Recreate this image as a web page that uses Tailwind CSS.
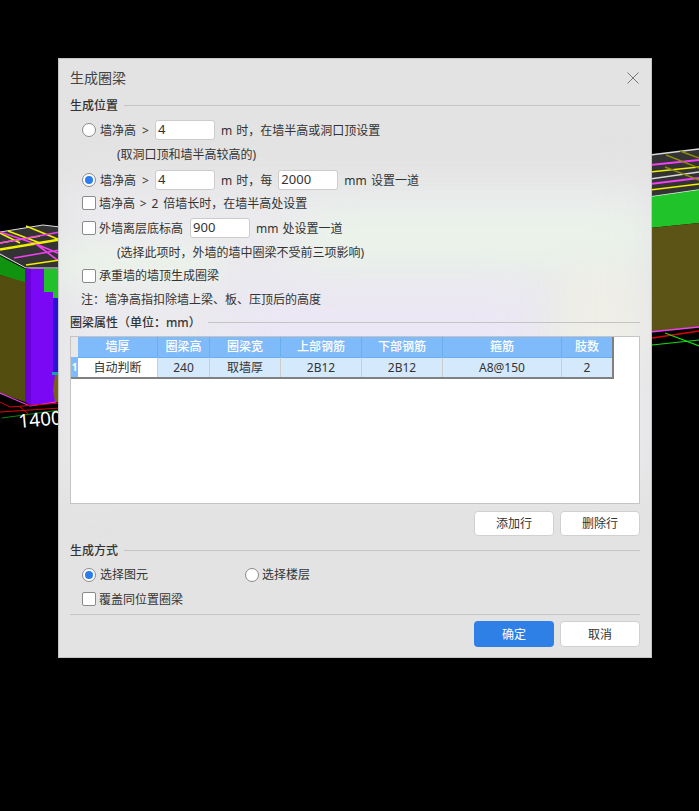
<!DOCTYPE html>
<html lang="zh-CN">
<head>
    <meta charset="UTF-8">
    <meta name="viewport" content="width=device-width, initial-scale=1.0">
    <title>生成圈梁</title>
    <script src="https://cdn.jsdelivr.net/npm/@tailwindcss/browser@4"></script>
</head>
<body class="bg-black">
<div class="relative w-[699px] h-[811px] overflow-hidden bg-black font-['Noto_Sans','Noto_Sans_CJK_SC',sans-serif] text-xs text-[#333]">

    <!-- 3d model behind the dialog -->
    <svg class="absolute left-0 top-0" width="699" height="811" viewBox="0 0 699 811">
        <!-- left block -->
        <polygon points="0,232 43,225 60,227 60,269 30,269 0,256" fill="#333333"/>
        <polyline points="0,232 43,225 60,227" fill="none" stroke="#dddddd" stroke-width="1"/>
        <path d="M0,233 L20,243 M8,231 L40,243 M0,250 L60,240 M0,243 L40,236 M26,226 L60,240" stroke="#f0f000" stroke-width="1.6" fill="none"/>
        <path d="M0,232 L36,244 L60,254 M0,243 L60,232 M14,258 L60,250 M36,244 L60,262" stroke="#f040f0" stroke-width="1.6" fill="none"/>
        <path d="M0,249 L60,239 M26,265 L60,260" stroke="#f0f000" stroke-width="1.6" fill="none"/>
        <polyline points="0,254 26,268 60,268" fill="none" stroke="#e8e8e8" stroke-width="1"/>
        <polygon points="0,256 25,269 25,283 0,275" fill="#109410"/>
        <polygon points="0,275 25,282 25,402 0,393" fill="#544d10"/>
        <polygon points="25,268 31,269 31,406 25,402" fill="#6a00d8"/>
        <polygon points="31,269 60,269 60,402 31,406" fill="#7a08f4"/>
        <polygon points="44,269 60,269 60,299 53,298 53,292 44,292" fill="#22c02a"/>
        <polygon points="53,298 60,298 60,372 53,372" fill="#2a10d8"/>
        <polygon points="52,372 60,372 60,375 52,375" fill="#10a0b0"/>
        <polygon points="55,375 60,375 60,402 55,402 53,390" fill="#7a6018"/>
        <polyline points="0,393 30,406 56,402" fill="none" stroke="#e040e0" stroke-width="1.2"/>
        <path d="M0,402 L10,407 L60,403 M0,412 L60,408 M20,407 L28,414" stroke="#e00000" stroke-width="1" fill="none"/>
        <path d="M2,418 L60,410" stroke="#0c8a0c" stroke-width="1" fill="none"/>
        <text x="19" y="428" fill="#ffffff" font-size="19" font-family="Noto Sans" transform="rotate(-5 19 428)">1400</text>

        <!-- right block -->
        <polygon points="650,155 699,149 699,190 650,197" fill="#333333"/>
        <path d="M650,155 L699,149" stroke="#d8d8d8" stroke-width="1.4"/>
        <path d="M650,179 L699,172" stroke="#d8d8d8" stroke-width="1.4"/>
        <path d="M650,197 L699,190" stroke="#e8e8e8" stroke-width="1.4"/>
        <path d="M650,165 L699,160 M650,184 L699,178" stroke="#f040f0" stroke-width="2" fill="none"/>
        <path d="M650,172 L699,167 M650,190 L699,184" stroke="#f0f000" stroke-width="1.6" fill="none"/>
        <path d="M680,151 L699,158 M666,155 L699,168 M665,167 L699,180" stroke="#8a8a10" stroke-width="1.4" fill="none"/>
        <polygon points="650,197 699,190 699,223 650,228" fill="#20c42a"/>
        <polygon points="650,228 699,223 699,327 650,332" fill="#5c5416"/>
        <path d="M650,332 L699,327" stroke="#f040f0" stroke-width="1.6"/>
        <path d="M652,338 L699,331" stroke="#e00000" stroke-width="1.4"/>
        <path d="M652,345 L699,340 M665,333 L699,346" stroke="#10e010" stroke-width="1.2" fill="none"/>
    </svg>

    <!-- dialog -->
    <div class="absolute left-[58px] top-[58px] w-[594px] overflow-hidden border border-[#c4c4c4] bg-[#e3e3e3] [word-spacing:1px]">
        <!-- washed out tint of the model through the dialog -->
        <div class="absolute left-0 top-[125px] h-[300px] w-full bg-[#ebeaee] blur-xl"></div>
        <div class="absolute left-[240px] top-[155px] h-[50px] w-[350px] bg-[#eaf5e8] blur-xl"></div>
        <div class="absolute left-0 top-[190px] h-[30px] w-[160px] bg-[#ebf5e8] blur-lg"></div>
        <div class="absolute left-[170px] top-[240px] h-[80px] w-[300px] bg-[#ebe6f6] blur-xl"></div>
        <div class="absolute left-[500px] top-[210px] h-[100px] w-[80px] bg-[#eeeee6] blur-lg"></div>

        <div class="relative flex flex-col px-[11px] pb-[10px]">
            <div class="flex h-[38px] items-center justify-between">
                <span class="text-sm text-[#444]">生成圈梁</span>
                <svg class="mr-[1px]" width="12" height="12" viewBox="0 0 12 12"><path d="M0.5,0.5 L11.5,11.5 M11.5,0.5 L0.5,11.5" stroke="#777" stroke-width="1"/></svg>
            </div>

            <div class="flex h-4 items-center gap-[6px]">
                <span class="pt-[2px] font-medium">生成位置</span>
                <div class="h-px flex-1 bg-[#c4c4c4]"></div>
            </div>

            <div class="mt-[5px] flex h-6 items-center pl-3">
                <span class="size-[14px] rounded-full border border-[#8a8a8a] bg-white"></span>
                <span class="ml-1 pt-[2px] [word-spacing:3px]">墙净高 &gt;</span>
                <span class="ml-[6px] flex h-5 w-[60px] items-center rounded-[3px] border border-[#ccc] bg-white pl-[2px] text-[13px]">4</span>
                <span class="ml-[6px] pt-[2px]">m 时，在墙半高或洞口顶设置</span>
            </div>
            <div class="flex h-6 items-center pt-[2px] pl-[47px]">(取洞口顶和墙半高较高的)</div>
            <div class="mt-[2px] flex h-6 items-center pl-3">
                <span class="flex size-[14px] items-center justify-center rounded-full border border-[#8a8a8a] bg-white"><span class="size-2 rounded-full bg-[#2b7de9]"></span></span>
                <span class="ml-1 pt-[2px] [word-spacing:3px]">墙净高 &gt;</span>
                <span class="ml-[6px] flex h-5 w-[60px] items-center rounded-[3px] border border-[#ccc] bg-white pl-[2px] text-[13px]">4</span>
                <span class="ml-[6px] pt-[2px]">m 时，每</span>
                <span class="ml-[6px] flex h-5 w-[60px] items-center rounded-[3px] border border-[#ccc] bg-white pl-[2px] text-[13px]">2000</span>
                <span class="ml-[6px] pt-[2px]">mm 设置一道</span>
            </div>
            <div class="-mt-px flex h-6 items-center pl-3">
                <span class="size-[14px] rounded-[2px] border border-[#8a8a8a] bg-white"></span>
                <span class="ml-[3px] pt-[2px] [word-spacing:1.7px]">墙净高 &gt; 2 倍墙长时，在墙半高处设置</span>
            </div>
            <div class="mt-px flex h-6 items-center pl-3">
                <span class="size-[14px] rounded-[2px] border border-[#8a8a8a] bg-white"></span>
                <span class="ml-[3px] pt-[2px]">外墙离层底标高</span>
                <span class="ml-[7px] flex h-5 w-[60px] items-center rounded-[3px] border border-[#ccc] bg-white pl-[2px] text-[13px]">900</span>
                <span class="ml-[6px] pt-[2px]">mm 处设置一道</span>
            </div>
            <div class="flex h-6 items-center pt-[2px] pl-[47px]">(选择此项时，外墙的墙中圈梁不受前三项影响)</div>
            <div class="flex h-[23px] items-center pl-3">
                <span class="size-[14px] rounded-[2px] border border-[#8a8a8a] bg-white"></span>
                <span class="ml-[3px]">承重墙的墙顶生成圈梁</span>
            </div>
            <div class="flex h-6 items-center pt-[2px] pl-[11px]">注：墙净高指扣除墙上梁、板、压顶后的高度</div>

            <div class="flex h-[22px] items-center gap-[7px]">
                <span class="pt-[2px] font-medium">圈梁属性（单位：mm）</span>
                <div class="h-px flex-1 bg-[#c4c4c4]"></div>
            </div>

            <!-- table -->
            <div class="mt-[3px] h-[168px] border border-[#c4c4c4] bg-white">
                <div class="inline-grid grid-cols-[7px_80px_52px_71px_81px_81px_119px_50px] grid-rows-[20px_20px] border-r-2 border-b-2 border-r-[#808080] border-b-[#808080] text-center leading-[20px]">
                    <div class="bg-[#e8e8e8]"></div>
                    <div class="border-r border-[#6aaef0] bg-[#7fbafb] font-medium text-white">墙厚</div>
                    <div class="border-r border-[#6aaef0] bg-[#7fbafb] font-medium text-white">圈梁高</div>
                    <div class="border-r border-[#6aaef0] bg-[#7fbafb] font-medium text-white">圈梁宽</div>
                    <div class="border-r border-[#6aaef0] bg-[#7fbafb] font-medium text-white">上部钢筋</div>
                    <div class="border-r border-[#6aaef0] bg-[#7fbafb] font-medium text-white">下部钢筋</div>
                    <div class="border-r border-[#6aaef0] bg-[#7fbafb] font-medium text-white">箍筋</div>
                    <div class="bg-[#7fbafb] font-medium text-white">肢数</div>
                    <div class="bg-[#7fbafb] text-[10px] font-bold text-white">1</div>
                    <div class="border-t border-r border-t-[#6aaef0] border-r-[#ccc] bg-white">自动判断</div>
                    <div class="border-t border-r border-t-[#6aaef0] border-r-[#ccc] bg-[#d5e9fd]">240</div>
                    <div class="border-t border-r border-t-[#6aaef0] border-r-[#ccc] bg-[#d5e9fd]">取墙厚</div>
                    <div class="border-t border-r border-t-[#6aaef0] border-r-[#ccc] bg-[#d5e9fd]">2B12</div>
                    <div class="border-t border-r border-t-[#6aaef0] border-r-[#ccc] bg-[#d5e9fd]">2B12</div>
                    <div class="border-t border-r border-t-[#6aaef0] border-r-[#ccc] bg-[#d5e9fd]">A8@150</div>
                    <div class="border-t border-t-[#6aaef0] bg-[#d5e9fd]">2</div>
                </div>
            </div>

            <div class="mt-[7px] flex justify-end gap-[6px]">
                <button class="h-[25px] w-20 rounded-[4px] border border-[#d0d0d0] bg-white">添加行</button>
                <button class="h-[25px] w-20 rounded-[4px] border border-[#d0d0d0] bg-white">删除行</button>
            </div>

            <div class="mt-[6px] flex h-4 items-center gap-[6px]">
                <span class="pt-[2px] font-medium">生成方式</span>
                <div class="h-px flex-1 bg-[#c4c4c4]"></div>
            </div>

            <div class="mt-[5px] flex h-6 items-center pl-3">
                <span class="flex size-[14px] items-center justify-center rounded-full border border-[#8a8a8a] bg-white"><span class="size-2 rounded-full bg-[#2b7de9]"></span></span>
                <span class="ml-1 w-[145px]">选择图元</span>
                <span class="size-[14px] rounded-full border border-[#8a8a8a] bg-white"></span>
                <span class="ml-[3px]">选择楼层</span>
            </div>
            <div class="flex h-6 items-center pl-3">
                <span class="size-[14px] rounded-[2px] border border-[#8a8a8a] bg-white"></span>
                <span class="ml-[3px] pt-[2px]">覆盖同位置圈梁</span>
            </div>

            <div class="mt-[3px] h-px bg-[#c4c4c4]"></div>

            <div class="mt-[6px] flex justify-end gap-[6px]">
                <button class="h-[26px] w-20 rounded-[4px] bg-[#2e7fe6] pt-[2px] text-white">确定</button>
                <button class="h-[26px] w-20 rounded-[4px] border border-[#d0d0d0] bg-white pt-[2px]">取消</button>
            </div>
        </div>
    </div>
</div>
</body>
</html>
